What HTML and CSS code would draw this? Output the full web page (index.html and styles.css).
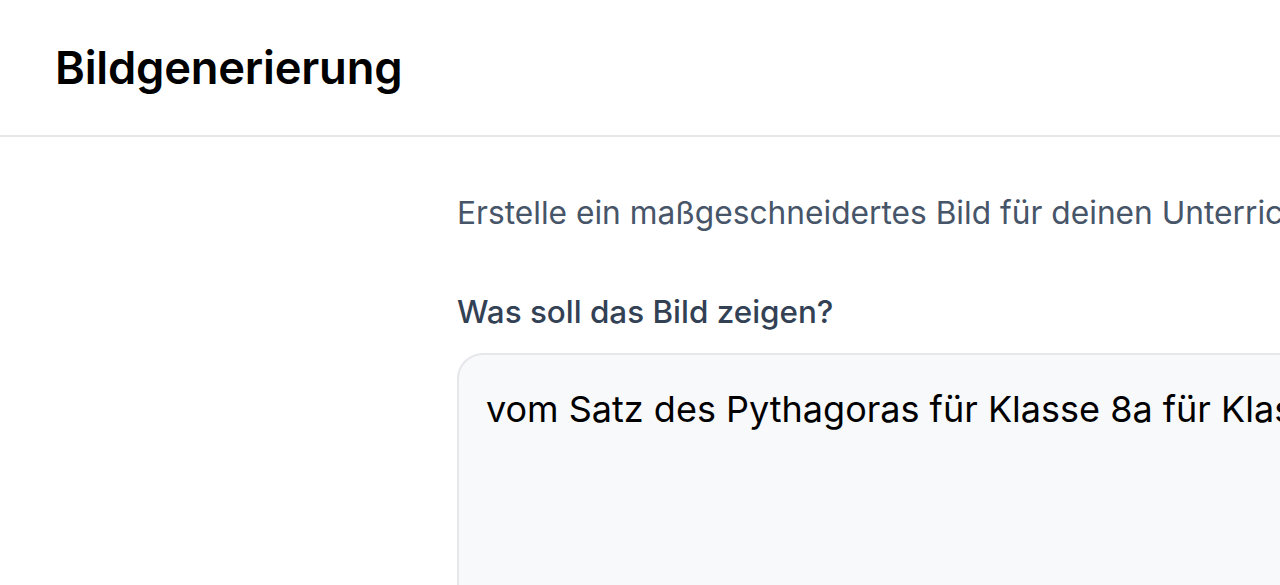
FILE: index.html
```html
<!DOCTYPE html>
<html lang="de">
<head>
<meta charset="utf-8">
<title>Bildgenerierung</title>
<link rel="stylesheet" href="styles.css">
</head>
<body>
<header class="topbar">
  <h1 class="title">Bildgenerierung</h1>
</header>
<main class="main">
  <section class="form">
    <p class="intro">Erstelle ein maßgeschneidertes Bild für deinen Unterricht.</p>
    <label class="label" for="prompt">Was soll das Bild zeigen?</label>
    <div class="field" id="prompt">vom Satz des Pythagoras für Klasse 8a für Klasse 8a</div>
  </section>
</main>
</body>
</html>
```
FILE: styles.css
```css
html, body {
  margin: 0;
  padding: 0;
  background: #ffffff;
  overflow: hidden;
  height: 585px;
}
body {
  font-family: Inter, "Noto Sans", sans-serif;
  color: #000;
}
.topbar {
  border-bottom: 2px solid #e5e7eb;
  display: flex;
  align-items: center;
  padding-left: 55px;
  box-sizing: border-box;
  height: 137px;
}
.title {
  margin: 0;
  font-size: 45.3px;
  font-weight: 600;
  letter-spacing: -0.2px;
  white-space: nowrap;
}
.main {
  padding-left: 457px;
  padding-top: 57px;
}
.form {
  width: 1400px;
  display: flex;
  flex-direction: column;
  align-items: flex-start;
}
.intro {
  margin: 0;
  font-size: 31.7px;
  line-height: 38px;
  color: #475569;
  white-space: nowrap;
}
.label {
  margin-top: 61px;
  font-size: 31.4px;
  line-height: 38px;
  font-weight: 500;
  color: #334155;
  white-space: nowrap;
}
.field {
  margin-top: 22px;
  width: 1000px;
  height: 400px;
  box-sizing: border-box;
  border: 2px solid #e5e7eb;
  border-radius: 26px;
  background: #f8f9fb;
  padding: 32px 27px;
  font-size: 36px;
  line-height: 44px;
  white-space: nowrap;
  overflow: hidden;
}
```
